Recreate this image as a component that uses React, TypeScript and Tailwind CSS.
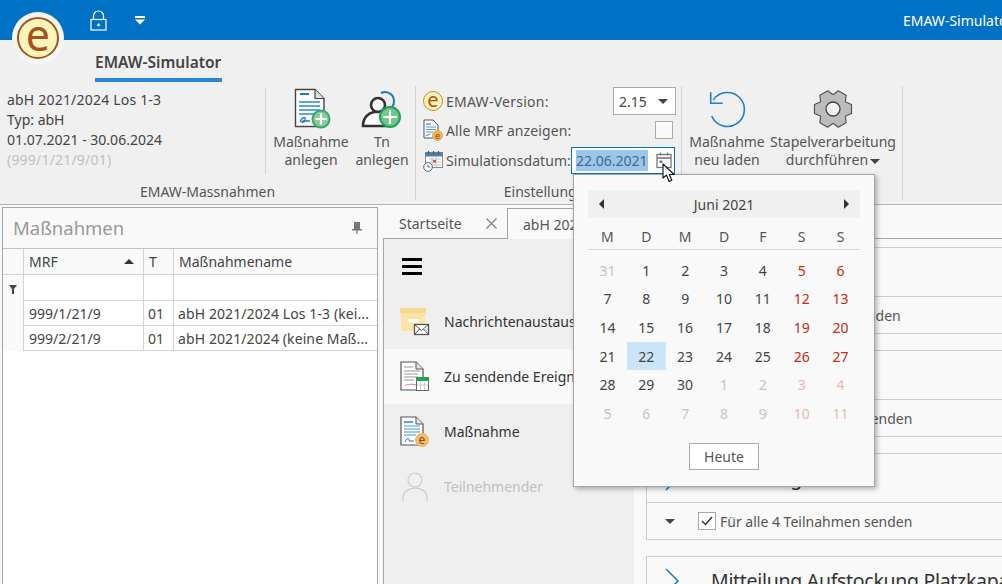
import React from "react";

const WEEKDAYS = ["M", "D", "M", "D", "F", "S", "S"];

// calendar cells, first row starts with the last day of May
const DAYS = [31, ...Array.from({ length: 30 }, (_, i) => i + 1), ...Array.from({ length: 11 }, (_, i) => i + 1)];

function dayClass(index: number) {
  const outside = index === 0 || index > 30;
  const weekend = index % 7 >= 5;
  if (outside && weekend) return "text-[#ecb9ae]";
  if (outside) return "text-[#c4c4c4]";
  if (weekend) return "text-[#c8290f]";
  return "text-[#444444]";
}

function ELogo({ small }: { small?: boolean }) {
  return (
    <div
      className={
        small
          ? "flex h-[20px] w-[20px] items-center justify-center rounded-full border border-[#c98a3c] bg-[#fdf3b4] text-[20px] leading-none text-[#a5531c]"
          : "flex h-[42px] w-[42px] items-center justify-center rounded-full border-2 border-[#a5561f] bg-[#fdf5b9] text-[43px] font-normal leading-none text-[#a5531c]"
      }
    >
      <span className={small ? "-mt-[3px]" : "-mt-[8px]"}>e</span>
    </div>
  );
}

function GreenPlus({ cx, cy, r, ring, fill }: { cx: number; cy: number; r: number; ring: string; fill: string }) {
  return (
    <g>
      <circle cx={cx} cy={cy} r={r} fill={fill} stroke={ring} strokeWidth="2" />
      <path d={`M${cx - r + 3} ${cy}H${cx + r - 3}M${cx} ${cy - r + 3}V${cy + r - 3}`} stroke="#fff" strokeWidth="2.2" />
    </g>
  );
}

function NewDocIcon() {
  return (
    <svg width="38" height="42" viewBox="0 0 38 42" className="ml-[3px]">
      <path d="M1.5 1.5H21L30 10.5V38.5H1.5Z" fill="#fff" stroke="#444" strokeWidth="1.4" />
      <path d="M21 1.5V10.5H30" fill="#ddd" stroke="#444" strokeWidth="1.2" />
      <path d="M6 6H15" stroke="#1f78c8" strokeWidth="2" />
      <path d="M5 14H26M5 18H26M5 22H26M5 26H20" stroke="#2a86d6" strokeWidth="1.4" />
      <path d="M6 34C8 29 12 28 11 32C10 35 6 35 9 33H16" fill="none" stroke="#1f78c8" strokeWidth="1.4" />
      <GreenPlus cx={27} cy={31} r={8.5} ring="#3aa866" fill="#86cc9c" />
    </svg>
  );
}

function AddPersonIcon() {
  return (
    <svg width="42" height="42" viewBox="0 0 42 42">
      <path d="M20 5A9 9 0 0 1 33 13A9 9 0 0 1 31 19" fill="none" stroke="#1f78c8" strokeWidth="2" />
      <circle cx="17" cy="17" r="7" fill="#fff" stroke="#333" strokeWidth="2.6" />
      <path d="M2 38C2 29 8 25 13 24L21 24C23 25 25 27 26 29L24 38Z" fill="#fff" stroke="#333" strokeWidth="2.6" />
      <GreenPlus cx={29} cy={29} r={10} ring="#1fa157" fill="#72c88c" />
    </svg>
  );
}

function ReloadIcon() {
  return (
    <svg width="40" height="40" viewBox="0 0 40 40" fill="none" stroke="#1f7fcb" strokeWidth="1.6">
      <path d="M6.3 11A17 17 0 1 1 4.7 27" />
      <path d="M3.7 3.3V14.3H15.7" />
    </svg>
  );
}

function gearPath(cx: number, cy: number, outer: number, inner: number) {
  const points: string[] = [];
  for (let i = 0; i < 6; i++) {
    const a = (i * Math.PI) / 3;
    const offsets: [number, number][] = [
      [-0.5, inner],
      [-0.24, outer],
      [0.24, outer],
      [0.5, inner],
    ];
    offsets.forEach(([o, r]) => {
      points.push(`${(cx + r * Math.cos(a + o)).toFixed(1)} ${(cy + r * Math.sin(a + o)).toFixed(1)}`);
    });
  }
  return "M" + points.join("L") + "Z";
}

function GearIcon() {
  return (
    <svg width="40" height="40" viewBox="0 0 40 40">
      <path d={gearPath(20, 20, 19, 14.5)} fill="#bcbcbc" stroke="#555" strokeWidth="1.2" strokeLinejoin="round" />
      <circle cx="20" cy="20" r="7" fill="#f0f0f0" stroke="#444" strokeWidth="1.3" />
    </svg>
  );
}

function SmallDocIcon() {
  return (
    <svg width="20" height="22" viewBox="0 0 20 22">
      <path d="M1 1H10L15 6V19H1Z" fill="#fff" stroke="#555" />
      <path d="M3 5H8" stroke="#2a86d6" strokeWidth="1.2" />
      <path d="M3 8H13M3 10.5H13M3 13H10" stroke="#4a98dc" />
      <path d="M3 17L7 15" stroke="#2a86d6" />
      <circle cx="14.5" cy="16.5" r="5" fill="#f3b45f" stroke="#e8a64c" />
      <text x="14.5" y="19.5" textAnchor="middle" fontSize="9" fill="#8a4a12" fontFamily="Noto Sans, sans-serif">e</text>
    </svg>
  );
}

function CalendarClockIcon() {
  return (
    <svg width="20" height="22" viewBox="0 0 20 22">
      <rect x="2.5" y="2.5" width="17" height="15" fill="#fff" stroke="#8a8a8a" />
      <rect x="2.5" y="2.5" width="17" height="4" fill="#4a7fa8" />
      <path d="M5.5 1V4M10.5 1V4M15.5 1V4" stroke="#555" strokeWidth="1.2" />
      <path d="M6 9H18M6 12H18M6 15H18M9 7V17M13 7V17" stroke="#c4c4c4" />
      <rect x="10" y="10" width="3" height="2.5" fill="#e05050" />
      <circle cx="5" cy="17" r="4.3" fill="#fff" stroke="#4d6a80" />
      <path d="M5 14.5V17H7" fill="none" stroke="#4d6a80" />
    </svg>
  );
}

function PickerIcon() {
  return (
    <svg width="16" height="17" viewBox="0 0 16 17" fill="none" stroke="#777" strokeWidth="1.3">
      <rect x="1" y="2.5" width="14" height="13" />
      <path d="M1 6H15" strokeWidth="1.6" />
      <path d="M4.5 0.5V3.5M11.5 0.5V3.5" />
      <rect x="3.5" y="8.5" width="3" height="2.5" fill="#777" stroke="none" />
    </svg>
  );
}

function ArchiveMailIcon() {
  return (
    <svg width="30" height="28" viewBox="0 0 30 28">
      <rect x="0" y="0" width="26" height="5" fill="#f7d98d" />
      <rect x="1" y="5" width="24" height="18" fill="#fbe4a6" />
      <rect x="8" y="11" width="11" height="3.5" rx="1.5" fill="#fff" />
      <rect x="14.5" y="16.5" width="14" height="10" fill="#fff" stroke="#555" strokeWidth="1.3" />
      <path d="M15 17L21.5 22.5L28 17M15 26L19.5 21M28 26L23.5 21" fill="none" stroke="#555" />
    </svg>
  );
}

function EventDocIcon() {
  return (
    <svg width="30" height="31" viewBox="0 0 30 31">
      <path d="M1 1H16L23 8V29H1Z" fill="#fff" stroke="#555" strokeWidth="1.2" />
      <path d="M16 1V8H23" fill="#e4e4e4" stroke="#555" />
      <path d="M4 6H13M4 10H20M4 13H18M4 16H18M4 19H14" stroke="#bbb" strokeWidth="1.4" />
      <path d="M5 25C7 22 9 25 11 23L16 24" fill="none" stroke="#c675c0" />
      <rect x="16.5" y="16.5" width="12" height="13" fill="#fff" stroke="#666" />
      <rect x="16" y="16" width="13" height="4" fill="#1fa157" />
      <path d="M20.5 21V29M24.5 21V29M17 24H28" stroke="#ccc" />
    </svg>
  );
}

function MeasureDocIcon() {
  return (
    <svg width="30" height="31" viewBox="0 0 30 31">
      <path d="M1 1H16L23 8V29H1Z" fill="#fff" stroke="#555" strokeWidth="1.2" />
      <path d="M16 1V8H23" fill="#e4e4e4" stroke="#555" />
      <path d="M4 6H13" stroke="#1f78c8" strokeWidth="1.4" />
      <path d="M4 10H20M4 13H20M4 16H20M4 19H16" stroke="#3f97dc" strokeWidth="1.2" />
      <path d="M5 26C7 21 10 22 9 25L14 25" fill="none" stroke="#1f78c8" />
      <circle cx="22" cy="24" r="6.5" fill="#f5bd72" stroke="#eeb05c" />
      <text x="22" y="28" textAnchor="middle" fontSize="12" fill="#8a4a12" fontFamily="Noto Sans, sans-serif">e</text>
    </svg>
  );
}

function PersonOutlineIcon() {
  return (
    <svg width="26" height="29" viewBox="0 0 26 29" fill="none" stroke="#c9c9c9" strokeWidth="1.1">
      <circle cx="13" cy="8" r="7" />
      <path d="M1 29V26C1 20 6 16 13 16C20 16 25 20 25 26V29" />
    </svg>
  );
}

function CursorIcon() {
  return (
    <svg width="14" height="20" viewBox="0 0 14 20">
      <path d="M1 1V15L4.5 12L7 18.5L9.8 17.3L7.3 11.5H12Z" fill="#fff" stroke="#111" strokeWidth="1.1" strokeLinejoin="round" />
    </svg>
  );
}

function RibbonButton({ icon, lines, caret }: { icon: React.ReactNode; lines: string[]; caret?: boolean }) {
  return (
    <div className="flex flex-col items-center pt-[2px]">
      <div className="flex h-[42px] items-center justify-center">{icon}</div>
      <div className="mt-[3px] text-center text-[14px] leading-[18px] text-[#555]">
        <div className="whitespace-nowrap">{lines[0]}</div>
        <div className="flex items-center justify-center gap-[2px]">
          {lines[1]}
          {caret && <span className="mt-[2px] h-0 w-0 border-x-[5px] border-t-[5px] border-x-transparent border-t-[#444]" />}
        </div>
      </div>
    </div>
  );
}

function GroupLabel({ children }: { children: React.ReactNode }) {
  return <div className="flex h-[18px] items-center justify-center text-[14px] text-[#555]">{children}</div>;
}

function GridRow({ mrf, t, name }: { mrf: string; t: string; name: string }) {
  return (
    <div className="flex h-[25px] items-center text-[14px] text-[#444]">
      <div className="h-full w-[21px] shrink-0 border-r border-[#d4d4d4] bg-[#f9f9f9]" />
      <div className="flex h-full min-w-0 flex-1 border-b border-[#d4d4d4]">
        <div className="flex h-full w-[120px] shrink-0 items-center border-r border-[#d4d4d4] pl-[5px]">{mrf}</div>
        <div className="flex h-full w-[30px] shrink-0 items-center border-r border-[#d4d4d4] pl-[4px]">{t}</div>
        <div className="flex h-full min-w-0 flex-1 items-center overflow-hidden whitespace-nowrap pl-[4px] tracking-[0.1px]">{name}</div>
      </div>
    </div>
  );
}

function NavItem({ icon, label, selected, disabled }: { icon: React.ReactNode; label: string; selected?: boolean; disabled?: boolean }) {
  return (
    <div className={`flex h-[55px] items-center ${selected ? "bg-[#f9f9f9]" : ""}`}>
      <div className="flex w-[60px] shrink-0 justify-center pl-[2px]">{icon}</div>
      <span className={`whitespace-nowrap text-[14px] ${disabled ? "text-[#c0c0c0]" : "text-[#333]"}`}>{label}</span>
    </div>
  );
}

function Card({ title, send, last }: { title: string; send?: string; last?: boolean }) {
  return (
    <div className={`border border-[#cdcdcd] ${last ? "" : "mb-[16px]"}`}>
      <div className="flex h-[48px] items-center">
        <svg width="16" height="28" viewBox="0 0 16 28" className="ml-[17px] shrink-0" fill="none" stroke="#1f7fcb" strokeWidth="1.6">
          <path d="M2 2L14 14L2 26" />
        </svg>
        <span className="ml-[31px] whitespace-nowrap text-[19.5px] tracking-[-0.3px] text-[#333]">{title}</span>
      </div>
      {send && (
        <div className="flex h-[37px] items-center border-t border-[#cdcdcd]">
          <span className="ml-[18px] h-0 w-0 border-x-[5px] border-t-[5px] border-x-transparent border-t-[#444]" />
          <span className="ml-[23px] flex h-[18px] w-[18px] items-center justify-center border border-[#a8a8a8] bg-white">
            <svg width="12" height="10" viewBox="0 0 12 10" fill="none" stroke="#333" strokeWidth="1.5">
              <path d="M1 5L4.5 8.5L11 1" />
            </svg>
          </span>
          <span className="ml-[4px] whitespace-nowrap text-[14px] text-[#555]">{send}</span>
        </div>
      )}
    </div>
  );
}

function CalendarPopup() {
  return (
    <div className="absolute left-[573px] top-[174px] flex h-[313px] w-[302px] flex-col border border-[#a6a6a6] bg-[#f9f9f9] px-[14px] pt-[15px] text-[#444] shadow-[2px_2px_5px_rgba(0,0,0,0.3)]">
      <div className="flex h-[28px] items-center justify-between bg-[#f0f0f0] px-[11px] text-[14px]">
        <span className="h-0 w-0 border-y-[5px] border-r-[5px] border-y-transparent border-r-[#333]" />
        <span>Juni 2021</span>
        <span className="h-0 w-0 border-y-[5px] border-l-[5px] border-y-transparent border-l-[#333]" />
      </div>
      <div className="grid h-[32px] grid-cols-7 items-center border-b border-[#d4d4d4] pt-[6px] text-center text-[14px] text-[#555]">
        {WEEKDAYS.map((d, i) => (
          <span key={i}>{d}</span>
        ))}
      </div>
      <div className="mt-[6px] grid auto-rows-[28.6px] grid-cols-7 text-center text-[14px]">
        {DAYS.map((d, i) => (
          <span key={i} className={`flex items-center justify-center ${dayClass(i)} ${i === 22 ? "bg-[#cce4f7]" : ""}`}>
            {d}
          </span>
        ))}
      </div>
      <div className="mt-[15px] flex justify-center">
        <div className="flex h-[27px] w-[70px] items-center justify-center border border-[#ababab] bg-white text-[14px] text-[#555]">Heute</div>
      </div>
    </div>
  );
}

export default function App() {
  return (
    <div className="relative flex h-[584px] w-[1002px] flex-col overflow-hidden bg-[#f0f0f0] font-['Noto_Sans',sans-serif]">
      {/* Title bar */}
      <div className="flex h-[40px] shrink-0 items-center bg-[#0072c6]">
        <svg width="17" height="21" viewBox="0 0 17 21" className="ml-[90px] shrink-0" fill="none" stroke="#fff" strokeWidth="1.2">
          <rect x="1" y="9.5" width="15" height="10.5" />
          <path d="M3.5 9.5V6A5 5 0 0 1 13.5 6V9.5" />
          <circle cx="8.5" cy="15" r="0.8" fill="#fff" />
        </svg>
        <svg width="10" height="9" viewBox="0 0 10 9" className="ml-[28px] shrink-0" fill="#fff">
          <rect width="10" height="2" />
          <path d="M0 3.5H10L5 8.5Z" />
        </svg>
        <span className="ml-[758px] shrink-0 whitespace-nowrap text-[14px] text-white">EMAW-Simulator</span>
      </div>

      {/* Ribbon tab */}
      <div className="h-[42px] shrink-0 pl-[95px]">
        <div className="inline-flex h-full flex-col justify-end">
          <span className="text-[15.5px] font-semibold leading-[24px] text-[#444]">EMAW-Simulator</span>
          <span className="mt-[4px] block h-[4px] w-[127px] bg-[#2b88d8]" />
        </div>
      </div>

      {/* Ribbon */}
      <div className="flex h-[123px] shrink-0 border-b border-[#b4b4b4] pt-[4px]">
        <div className="flex h-[114px] w-[416px] flex-col border-r border-[#d2d2d2]">
          <div className="flex h-[96px]">
            <div className="w-[265px] pl-[7px] pt-[4px] text-[14px] leading-[20px] text-[#444]">
              <div className="tracking-[0.2px]">abH 2021/2024 Los 1-3</div>
              <div>Typ: abH</div>
              <div>01.07.2021 - 30.06.2024</div>
              <div className="tracking-[0.2px] text-[#c0c0c0]">(999/1/21/9/01)</div>
            </div>
            <div className="mt-[2px] h-[86px] w-px bg-[#d2d2d2]" />
            <div className="ml-[6px] w-[78px]">
              <RibbonButton icon={<NewDocIcon />} lines={["Maßnahme", "anlegen"]} />
            </div>
            <div className="w-[64px]">
              <RibbonButton icon={<AddPersonIcon />} lines={["Tn", "anlegen"]} />
            </div>
          </div>
          <GroupLabel>EMAW-Massnahmen</GroupLabel>
        </div>

        <div className="flex h-[114px] w-[266px] flex-col border-r border-[#d2d2d2]">
          <div className="h-[96px] w-[260px] pl-[7px] pt-[1px] text-[14px] text-[#555]">
            <div className="flex h-[28px] items-center">
              <ELogo small />
              <span className="ml-[3px] tracking-[0.25px]">EMAW-Version:</span>
              <div className="ml-auto flex h-[28px] w-[63px] items-center justify-between border border-[#ababab] bg-white pl-[5px] pr-[7px] text-[#444]">
                2.15
                <span className="h-0 w-0 border-x-[5px] border-t-[5px] border-x-transparent border-t-[#444]" />
              </div>
            </div>
            <div className="mt-[5px] flex h-[20px] items-center">
              <SmallDocIcon />
              <span className="ml-[3px] tracking-[0.1px]">Alle MRF anzeigen:</span>
              <span className="ml-auto mr-[3px] h-[18px] w-[18px] border border-[#ababab] bg-[#f9f9f9]" />
            </div>
            <div className="mt-[7px] flex h-[27px] items-center">
              <CalendarClockIcon />
              <span className="ml-[3px] tracking-[0.05px]">Simulationsdatum:</span>
              <div className="ml-auto mr-[1px] flex h-[27px] w-[104px] items-center border border-[#0072c6] bg-white pl-[4px]">
                <span className="bg-[#9cc6e8] leading-[21px] text-[#3d6a8f]">22.06.2021</span>
                <span className="ml-auto mr-[2px]">
                  <PickerIcon />
                </span>
              </div>
            </div>
          </div>
          <GroupLabel>Einstellungen</GroupLabel>
        </div>

        <div className="flex h-[114px] w-[221px] border-r border-[#d2d2d2]">
          <div className="w-[90px]">
            <RibbonButton icon={<ReloadIcon />} lines={["Maßnahme", "neu laden"]} />
          </div>
          <div className="w-[122px]">
            <RibbonButton icon={<GearIcon />} lines={["Stapelverarbeitung", "durchführen"]} caret />
          </div>
        </div>
      </div>

      {/* Work area */}
      <div className="flex min-h-0 flex-1 bg-[#f8f8f8]">
        <div className="ml-[2px] mt-[2px] flex w-[376px] shrink-0 flex-col border-x border-t border-[#a6a6a6] bg-white">
          <div className="flex h-[41px] shrink-0 items-center justify-between border-b border-[#c4c4c4] bg-[#f9f9f9] pl-[10px] pr-[15px]">
            <span className="text-[18.5px] text-[#9a9a9a]">Maßnahmen</span>
            <svg width="10" height="12" viewBox="0 0 10 12" fill="#777">
              <rect x="2" y="0" width="6" height="7" />
              <rect x="0" y="7" width="10" height="1.5" />
              <rect x="4.4" y="8" width="1.2" height="4" />
            </svg>
          </div>
          <div className="flex h-[26px] shrink-0 items-center border-b border-[#d4d4d4] bg-[#f9f9f9] text-[14px] text-[#444]">
            <div className="h-full w-[21px] shrink-0 border-r border-[#d4d4d4]" />
            <div className="flex h-full w-[120px] shrink-0 items-center justify-between border-r border-[#d4d4d4] pl-[5px] pr-[9px]">
              MRF
              <span className="h-0 w-0 border-x-[5px] border-b-[5px] border-x-transparent border-b-[#333]" />
            </div>
            <div className="flex h-full w-[30px] shrink-0 items-center border-r border-[#d4d4d4] pl-[5px]">T</div>
            <div className="pl-[5px]">Maßnahmename</div>
          </div>
          <div className="flex h-[26px] shrink-0">
            <div className="flex h-full w-[21px] shrink-0 justify-center border-r border-[#d4d4d4] bg-[#f9f9f9] pt-[10px]">
              <svg width="8" height="9" viewBox="0 0 8 9" fill="#444">
                <path d="M0 0H8L5 4V9H3V4Z" />
              </svg>
            </div>
            <div className="flex min-w-0 flex-1 border-b border-[#d4d4d4]">
              <div className="w-[120px] shrink-0 border-r border-[#d4d4d4]" />
              <div className="w-[30px] shrink-0 border-r border-[#d4d4d4]" />
            </div>
          </div>
          <GridRow mrf="999/1/21/9" t="01" name="abH 2021/2024 Los 1-3 (kei..." />
          <GridRow mrf="999/2/21/9" t="01" name="abH 2021/2024 (keine Maß..." />
        </div>

        <div className="ml-[5px] flex min-w-0 flex-1 flex-col">
          <div className="flex h-[34px] shrink-0 items-end">
            <div className="flex h-[32px] w-[124px] shrink-0 items-center border-b border-[#a6a6a6] pl-[16px] pr-[10px] pt-[2px] text-[14px] text-[#555]">
              Startseite
              <svg width="11" height="11" viewBox="0 0 11 11" className="ml-auto" fill="none" stroke="#888" strokeWidth="1.4">
                <path d="M0.5 0.5L10.5 10.5M10.5 0.5L0.5 10.5" />
              </svg>
            </div>
            <div className="flex h-[31px] w-[160px] shrink-0 items-center overflow-hidden whitespace-nowrap border-x border-t border-[#a6a6a6] bg-[#f9f9f9] pl-[15px] text-[14px] text-[#555]">
              abH 2021/2024 Los 1-3
            </div>
            <div className="h-px flex-1 bg-[#a6a6a6]" />
          </div>
          <div className="flex min-h-0 flex-1 border-l border-[#a6a6a6]">
            <div className="w-[250px] shrink-0 bg-[#efefef]">
              <div className="flex h-[55px] items-center pl-[18px]">
                <div className="flex w-[20px] flex-col gap-[4px]">
                  <span className="block h-[3px] bg-black" />
                  <span className="block h-[3px] bg-black" />
                  <span className="block h-[3px] bg-black" />
                </div>
              </div>
              <NavItem icon={<ArchiveMailIcon />} label="Nachrichtenaustausch" />
              <NavItem icon={<EventDocIcon />} label="Zu sendende Ereignisse" selected />
              <NavItem icon={<MeasureDocIcon />} label="Maßnahme" />
              <NavItem icon={<PersonOutlineIcon />} label="Teilnehmender" disabled />
            </div>
            <div className="min-w-0 flex-1 overflow-hidden bg-[#f9f9f9] pl-[12px] pt-[8px]">
              <div className="w-[400px]">
                <Card title="Mitteilung" send="Für alle Teilnahmen senden" />
                <Card title="Mitteilung" send="Für alle 4 Teilnahmen senden" />
                <Card title="Mitteilung" send="Für alle 4 Teilnahmen senden" />
                <Card title="Mitteilung Aufstockung Platzkapazität" last />
              </div>
            </div>
          </div>
        </div>
      </div>

      {/* Logo */}
      <div className="absolute left-[12px] top-[12px] flex h-[52px] w-[52px] items-center justify-center rounded-full bg-[#f6f6f6]">
        <ELogo />
      </div>

      <CalendarPopup />

      {/* Mouse pointer over the date picker */}
      <div className="absolute left-[662px] top-[163px]">
        <CursorIcon />
      </div>
    </div>
  );
}
